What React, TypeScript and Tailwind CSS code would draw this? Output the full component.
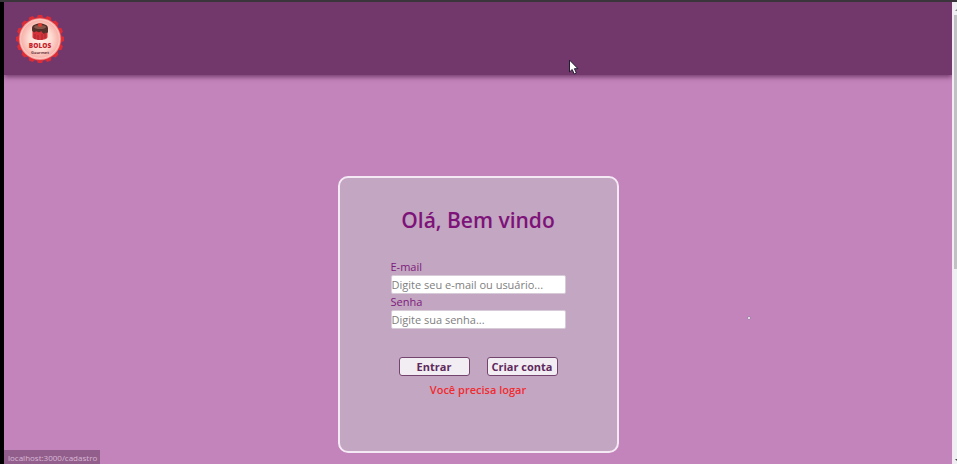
const badgeTeeth = Array.from({ length: 16 }, (_, i) => i * 22.5);

function Logo() {
  return (
    <svg viewBox="0 0 48 48" className="size-12" role="img" aria-label="Bolos Gourmet">
      <defs>
        <radialGradient id="plate">
          <stop offset="0" stopColor="#fff1ea" />
          <stop offset="0.55" stopColor="#fddbd2" />
          <stop offset="1" stopColor="#f5a69f" />
        </radialGradient>
      </defs>
      {badgeTeeth.map((a) => (
        <path key={a} d="M20 4L22 0h4l2 4z" fill="#dc2c38" transform={`rotate(${a} 24 24)`} />
      ))}
      <circle cx="24" cy="24" r="21.7" fill="#df3440" />
      <circle cx="24" cy="24" r="20.8" fill="url(#plate)" />
      <circle cx="24" cy="24" r="19.4" fill="none" stroke="#fbd6cf" strokeWidth="0.8" />
      <path d="M16.5 13v9c0 4 15 4 15 0v-9z" fill="#d5323a" />
      <path d="M19 19v5M22 20v5M26 19v6M29 18v5" stroke="#94282f" strokeWidth="0.8" />
      <path d="M16 13c0-6 16-6 16 0v4c-1 2-2 0-3 1s-2 1-3-1-2 1-4 0-2-1-3 0-3-1-3-2z" fill="#542f29" />
      <ellipse cx="24" cy="12" rx="6" ry="2" fill="#85574b" />
      <circle cx="24" cy="10" r="2" fill="#e33c30" />
      <text x="24" y="33" textAnchor="middle" fontFamily="Open Sans, sans-serif" fontSize="6.5" fontWeight="800" fill="#c51f2d">BOLOS</text>
      <text x="24" y="39" textAnchor="middle" fontFamily="Open Sans, sans-serif" fontSize="4" fontWeight="700" fill="#6e353e">Gourmet</text>
    </svg>
  );
}

function Field({ id, label, type, placeholder }: { id: string; label: string; type: string; placeholder: string }) {
  return (
    <div className="flex flex-col">
      <label htmlFor={id} className="h-4 text-[11px] leading-4 text-[#7c1b7c]">{label}</label>
      <input
        id={id}
        type={type}
        placeholder={placeholder}
        className="h-[19px] w-full rounded-xs border border-[#d8cbd8] bg-white text-[11px] leading-4 text-gray-800 placeholder:text-[#808080]"
      />
    </div>
  );
}

const buttonClass =
  "h-[19px] w-[71px] rounded-[3px] border border-[#74446f] bg-[#f2edf3] text-center text-[11px] leading-4 font-bold whitespace-nowrap text-[#5e295c]";

export default function App() {
  return (
    <div className="flex h-screen overflow-hidden border-t-2 border-[#3a353b] bg-black pl-1 font-['Open_Sans','Noto_Sans',sans-serif]">
      <div className="relative flex min-w-0 flex-1 flex-col overflow-hidden bg-[#c284ba]">
        <header className="flex h-[73px] shrink-0 items-center bg-[#72386b] px-3 shadow-[0_2px_5px_#72386b]">
          <a href="#inicio"><Logo /></a>
        </header>

        <main className="flex flex-1 flex-col items-center pt-[101px]">
          <form className="flex h-[277px] w-[281px] shrink-0 flex-col items-center rounded-[10px] border-2 border-[#f5e9f5] bg-[#c3a6c1] pt-[22px]" onSubmit={(e) => e.preventDefault()}>
            <h1 className="text-[21px] leading-10 font-semibold text-[#7d1279]">Olá, Bem vindo</h1>
            <div className="mt-[19px] flex w-[175px] flex-col">
              <Field id="email" label="E-mail" type="text" placeholder="Digite seu e-mail ou usuário..." />
              <Field id="senha" label="Senha" type="password" placeholder="Digite sua senha..." />
            </div>
            <div className="mt-7 flex gap-[17px]">
              <button type="submit" className={buttonClass}>Entrar</button>
              <button type="button" className={buttonClass}>Criar conta</button>
            </div>
            <p className="mt-1.5 text-[11px] leading-4 font-semibold text-[#f02b30]">Você precisa logar</p>
          </form>
        </main>

        <div className="absolute bottom-0 left-0 h-3.5 w-24 bg-[#925f8c] pl-1 text-[8px] leading-4 whitespace-nowrap text-[#d9b7d5]">
          localhost:3000/cadastro
        </div>
        <svg className="absolute top-[57px] left-[564px] h-4 w-3" viewBox="0 0 12 16" aria-hidden="true">
          <path d="M1.5 1v12l2.7-2.5 2 4.5 2.2-1-2-4.3H10z" fill="#fff" stroke="#241c35" strokeWidth="1" />
        </svg>
        <span className="absolute top-[314px] left-[743px] size-1 rounded-full border border-[#a080aa] bg-white" />
      </div>

      <div className="flex w-[5px] shrink-0 flex-col items-end justify-between border-l border-[#f8e6f6] bg-[#eef0f1]" aria-hidden="true">
        <svg className="h-[13px] w-1" viewBox="0 0 4 13"><path d="M2 9l2-2v2z" fill="#888" /></svg>
        <div className="h-[254px] w-[3px] bg-[#c1c1c3]" />
        <div className="flex-1" />
        <svg className="h-2 w-1" viewBox="0 0 4 8"><path d="M2 3h2v2z" fill="#444" /></svg>
      </div>
    </div>
  );
}
